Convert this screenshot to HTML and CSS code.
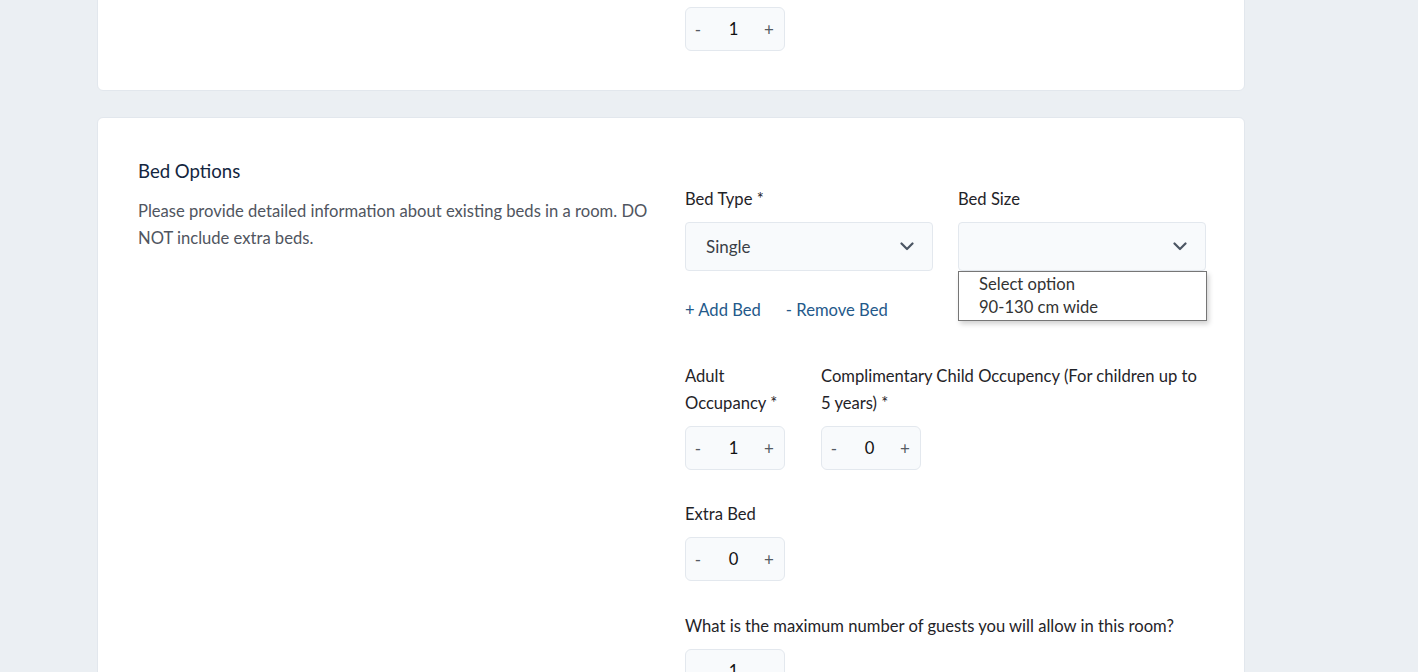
FILE: index.html
```html
<!DOCTYPE html>
<html>
<head>
<meta charset="utf-8">
<link rel="stylesheet" href="styles.css">
</head>
<body>
<div class="page">
  <section class="card card-top">
    <div class="grid">
      <div></div>
      <div class="col-right">
        <div class="stepper"><span class="pm">-</span><span class="num">1</span><span class="pm">+</span></div>
      </div>
    </div>
  </section>

  <section class="card card-bed">
    <div class="grid">
      <div class="col-left">
        <h2 class="title">Bed Options</h2>
        <p class="desc">Please provide detailed information about existing beds in a room. DO NOT include extra beds.</p>
      </div>
      <div class="col-right fields">
        <div class="row-two">
          <div class="field">
            <label class="label">Bed Type *</label>
            <div class="select">
              <span class="select-value">Single</span>
              <svg class="chev" width="14" height="9" viewBox="0 0 14 9"><path d="M1.5 1.5 L7 7 L12.5 1.5" fill="none" stroke="#4b5563" stroke-width="2.2" stroke-linecap="round" stroke-linejoin="round"/></svg>
            </div>
          </div>
          <div class="field">
            <label class="label">Bed Size</label>
            <div class="select select-open">
              <span class="select-value"></span>
              <svg class="chev" width="14" height="9" viewBox="0 0 14 9"><path d="M1.5 1.5 L7 7 L12.5 1.5" fill="none" stroke="#4b5563" stroke-width="2.2" stroke-linecap="round" stroke-linejoin="round"/></svg>
              <ul class="dropdown">
                <li>Select option</li>
                <li>90-130 cm wide</li>
              </ul>
            </div>
          </div>
        </div>

        <div class="links">
          <a class="link">+ Add Bed</a>
          <a class="link">- Remove Bed</a>
        </div>

        <div class="row-occ">
          <div class="field occ-adult">
            <label class="label">Adult Occupancy *</label>
            <div class="stepper"><span class="pm">-</span><span class="num">1</span><span class="pm">+</span></div>
          </div>
          <div class="field occ-child">
            <label class="label">Complimentary Child Occupency (For children up to 5 years) *</label>
            <div class="stepper"><span class="pm">-</span><span class="num">0</span><span class="pm">+</span></div>
          </div>
        </div>

        <div class="field group">
          <label class="label">Extra Bed</label>
          <div class="stepper"><span class="pm">-</span><span class="num">0</span><span class="pm">+</span></div>
        </div>

        <div class="field group group-last">
          <label class="label">What is the maximum number of guests you will allow in this room?</label>
          <div class="stepper"><span class="pm"></span><span class="num">1</span><span class="pm"></span></div>
        </div>
      </div>
    </div>
  </section>
</div>
</body>
</html>
```

FILE: styles.css
```css
* { box-sizing: border-box; }
html, body {
  margin: 0;
  padding: 0;
  background: #ebeff3;
  font-family: Lato, "Open Sans", sans-serif;
  color: #222;
  overflow: hidden;
}
.page {
  width: 1148px;
  margin-left: 97px;
  display: flex;
  flex-direction: column;
  gap: 26px;
}
.card {
  background: #fff;
  border: 1px solid #e2e7ed;
  border-radius: 6px;
  padding: 0 40px 0 40px;
}
.card-top {
  margin-top: -41px;
  padding-top: 47px;
  padding-bottom: 39px;
}
.card-bed {
  padding-top: 40px;
  padding-bottom: 60px;
}
.grid {
  display: grid;
  grid-template-columns: 520px 1fr;
  column-gap: 27px;
}
.title {
  margin: 0;
  font-size: 18.6px;
  font-weight: 400;
  line-height: 27px;
  color: #132640;
}
.desc {
  margin: 13px 0 0;
  font-size: 16.6px;
  line-height: 27px;
  color: #505560;
}
.fields {
  padding-top: 28px;
  display: flex;
  flex-direction: column;
}
.field {
  display: flex;
  flex-direction: column;
  align-items: flex-start;
}
.label {
  font-size: 16.6px;
  line-height: 27px;
  color: #1f2328;
  margin-bottom: 9px;
}
.row-two {
  display: grid;
  grid-template-columns: 248px 248px;
  column-gap: 25px;
}
.row-two .field { align-items: stretch; }
.select {
  position: relative;
  height: 49px;
  background: #f8fafc;
  border: 1px solid #e3e8ee;
  border-radius: 4px;
  display: flex;
  align-items: center;
  justify-content: space-between;
  padding: 0 18px 0 20px;
}
.select-value {
  font-size: 17px;
  color: #3a3f47;
}
.chev { display: block; }
.dropdown {
  position: absolute;
  left: -1px;
  top: 48px;
  width: 249px;
  margin: 0;
  padding: 1px 0 2px;
  list-style: none;
  background: #fff;
  border: 1px solid #767676;
  box-shadow: 2px 3px 5px rgba(0,0,0,0.18);
  z-index: 5;
}
.dropdown li {
  font-size: 16.6px;
  line-height: 22.5px;
  padding-left: 20px;
  color: #333;
}
.links {
  display: flex;
  gap: 25px;
  margin-top: 26px;
  line-height: 27px;
}
.link {
  font-size: 16.6px;
  color: #24598a;
  cursor: pointer;
}
.row-occ {
  display: flex;
  gap: 36px;
  margin-top: 39px;
}
.occ-adult { width: 100px; }
.occ-child { width: 384px; }
.row-occ .label { margin-bottom: 9px; }
.group { margin-top: 31px; }
.group-last { margin-top: 32px; }
.group .label { margin-bottom: 9px; }
.stepper {
  width: 100px;
  height: 44px;
  background: #f8fafc;
  border: 1px solid #e3e8ee;
  border-radius: 6px;
  display: flex;
  align-items: center;
  justify-content: space-between;
  padding: 0 8px 0 5px;
}
.pm {
  width: 14px;
  text-align: center;
  font-size: 17px;
  color: #555b63;
}
.num {
  font-size: 16.6px;
  color: #111;
}
```
